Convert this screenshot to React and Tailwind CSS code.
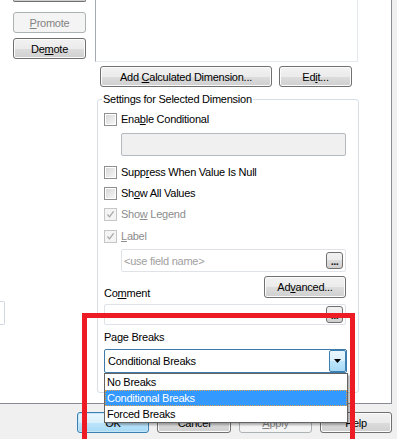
import React from 'react';

// Win7 style push button
const Btn = ({ children, className = '', disabled, def }) => {
  const look = disabled
    ? 'border-[#adb2b5] bg-[#f4f4f4] text-[#838383]'
    : def
      ? 'border-[#3c7fb1] bg-[linear-gradient(#eaf6fd_0%,#d9f0fc_50%,#bee6fd_50%,#a7d9f5_100%)] shadow-[inset_0_0_0_1px_#c4e5f6]'
      : 'border-[#707070] bg-[linear-gradient(#f2f2f2_0%,#ebebeb_50%,#dddddd_50%,#cfcfcf_100%)] shadow-[inset_0_0_0_1px_#fcfcfc]';
  return (
    <div className={`flex h-[21px] shrink-0 items-center justify-center rounded-[3px] border ${look} ${className}`}>
      {children}
    </div>
  );
};

const Check = ({ checked, disabled }) => (
  <span className={`flex h-[13px] w-[13px] shrink-0 items-center justify-center border p-[1px] ${disabled ? 'border-[#c6c6c6] bg-[#f4f4f4]' : 'border-[#8e8f8f] bg-white'}`}>
    <span className={`flex h-full w-full items-center justify-center ${disabled ? 'bg-[#f4f4f4]' : 'bg-[linear-gradient(135deg,#d8d8d8,#f6f6f6)]'}`}>
      {checked && (
        <svg width="9" height="9" viewBox="0 0 9 9">
          <path d="M1.5 4.5 L3.5 6.8 L7.6 1.4" stroke="#a3a3a3" strokeWidth="1.2" fill="none" />
        </svg>
      )}
    </span>
  </span>
);

const CheckRow = ({ children, checked, disabled, className = '' }) => (
  <div className={`flex h-[20px] items-center gap-[4px] ${disabled ? 'text-[#8d8d8d]' : ''} ${className}`}>
    <Check checked={checked} disabled={disabled} />
    <span>{children}</span>
  </div>
);

// small "..." browse button inside text boxes
const Dots = () => (
  <div className="mr-[2px] flex h-[17px] w-[17px] shrink-0 items-end justify-center rounded-[3px] border border-[#707070] bg-[linear-gradient(#f2f2f2_0%,#ebebeb_50%,#dddddd_50%,#cfcfcf_100%)] pb-[3px] text-[11px] leading-[8px] font-bold tracking-[-0.5px] text-[#222]">
    ...
  </div>
);

export default function App() {
  return (
    <div className="relative h-[439px] w-[397px] overflow-hidden bg-[#f0f0f0] text-[11px] leading-[14px] tracking-[-0.25px] text-black [font-family:'Liberation_Sans',Arial,sans-serif]">
      {/* tab page */}
      <div className="flex h-[404px] w-[392px] border-r border-b border-[#898c95] bg-white">
        {/* left column */}
        <div className="flex w-[95px] shrink-0 flex-col">
          <div className="ml-[13px] h-[2px] w-[73px] rounded-b-[3px] border-x border-b border-[#707070] bg-[#cfcfcf]" />
          <Btn disabled className="mt-[10px] ml-[13px] w-[73px]">
            <span><span className="underline">P</span>romote</span>
          </Btn>
          <Btn className="mt-[5px] ml-[13px] w-[73px]">
            <span>De<span className="underline">m</span>ote</span>
          </Btn>
          <div className="mt-[242px] h-[24px] w-[5px] rounded-r-[2px] border-y border-r border-[#d0d7e2] bg-white" />
        </div>

        {/* right column */}
        <div className="flex w-[264px] shrink-0 flex-col">
          <div className="h-[62px] w-[263px] border-r border-b border-l border-r-[#e3e9ef] border-b-[#e3e9ef] border-l-[#a5a9b2] bg-white" />

          <div className="mt-[4px] flex gap-[7px] pl-[5px]">
            <Btn className="w-[172px]">
              <span>Add <span className="underline">C</span>alculated Dimension...</span>
            </Btn>
            <Btn className="w-[73px]">
              <span>Ed<span className="underline">i</span>t...</span>
            </Btn>
          </div>

          <fieldset className="mt-[5px] ml-[2px] w-[262px] rounded-[3px] border border-[#d5dfe5] pb-[19px] pl-[6px]">
            <legend className="-ml-[2px] px-[1px] leading-[14px]">Settings for Selected Dimension</legend>

            <CheckRow className="mt-[3px]">
              Ena<span className="underline">b</span>le Conditional
            </CheckRow>
            <div className="mt-[4px] ml-[17px] h-[23px] w-[225px] rounded-[2px] border border-[#b5b9c0] bg-[#f0f0f0]" />

            <CheckRow className="mt-[6px]">
              Supp<span className="underline">r</span>ess When Value Is Null
            </CheckRow>
            <CheckRow className="mt-[1px]">
              Sh<span className="underline">o</span>w All Values
            </CheckRow>
            <CheckRow className="mt-[1px]" checked disabled>
              Sho<span className="underline">w</span> Legend
            </CheckRow>
            <CheckRow className="mt-[2px]" checked disabled>
              <span className="underline">L</span>abel
            </CheckRow>

            <div className="mt-[3px] ml-[17px] flex h-[23px] w-[225px] items-center justify-between rounded-[2px] border border-[#dfe3e8] bg-white pl-[2px] text-[#a0a0a0]">
              <span>&lt;use field name&gt;</span>
              <Dots />
            </div>

            <div className="mt-[4px] flex h-[22px] w-[242px] items-start justify-between">
              <span className="mt-[10px]">Co<span className="underline">m</span>ment</span>
              <Btn className="h-[22px] w-[82px]">
                <span>Ad<span className="underline">v</span>anced...</span>
              </Btn>
            </div>

            <div className="mt-[6px] flex h-[21px] w-[242px] items-center justify-end rounded-[2px] border border-[#dfe3e8] bg-white">
              <Dots />
            </div>

            <div className="mt-[5px]">
              Pa<span className="underline">g</span>e Breaks
            </div>

            <div className="relative mt-[5px] h-[24px] w-[243px]">
              <div className="flex h-full w-full items-center justify-between rounded-[2px] border border-[#3d7bad] bg-white pl-[3px]">
                <span>Conditional Breaks</span>
                <div className="flex h-[22px] w-[17px] items-center justify-center rounded-[2px] border border-[#3c7fb1] bg-[linear-gradient(#eaf6fd_0%,#d9f0fc_50%,#bee6fd_50%,#a7d9f5_100%)]">
                  <svg width="7" height="4" viewBox="0 0 7 4">
                    <path d="M0 0 H7 L3.5 4 Z" fill="#000" />
                  </svg>
                </div>
              </div>

              {/* open drop-down list */}
              <div className="absolute top-[24px] left-0 z-10 flex h-[50px] w-[244px] flex-col border border-[#646464] bg-white shadow-[2px_2px_2px_rgba(0,0,0,0.3)]">
                <div className="flex h-[16px] items-center pl-[2px]">No Breaks</div>
                <div className="flex h-[16px] items-center border border-dotted border-[#e0a050] bg-[#3399ff] pl-[1px] text-white">Conditional Breaks</div>
                <div className="flex h-[16px] items-center pl-[2px]">Forced Breaks</div>
              </div>
            </div>
          </fieldset>
        </div>
      </div>

      {/* dialog buttons */}
      <div className="flex h-[35px] gap-[8px] pt-[8px] pl-[77px]">
        <Btn def className="w-[72px]">OK</Btn>
        <Btn className="w-[74px]">Cancel</Btn>
        <Btn disabled className="w-[73px]">
          <span><span className="underline">A</span>pply</span>
        </Btn>
        <Btn className="w-[72px]">Help</Btn>
      </div>

      {/* red annotation frame */}
      <div className="absolute top-[313px] left-[82px] z-20 h-[140px] w-[273px] border-[5px] border-[#ed1c24]" />
    </div>
  );
}
